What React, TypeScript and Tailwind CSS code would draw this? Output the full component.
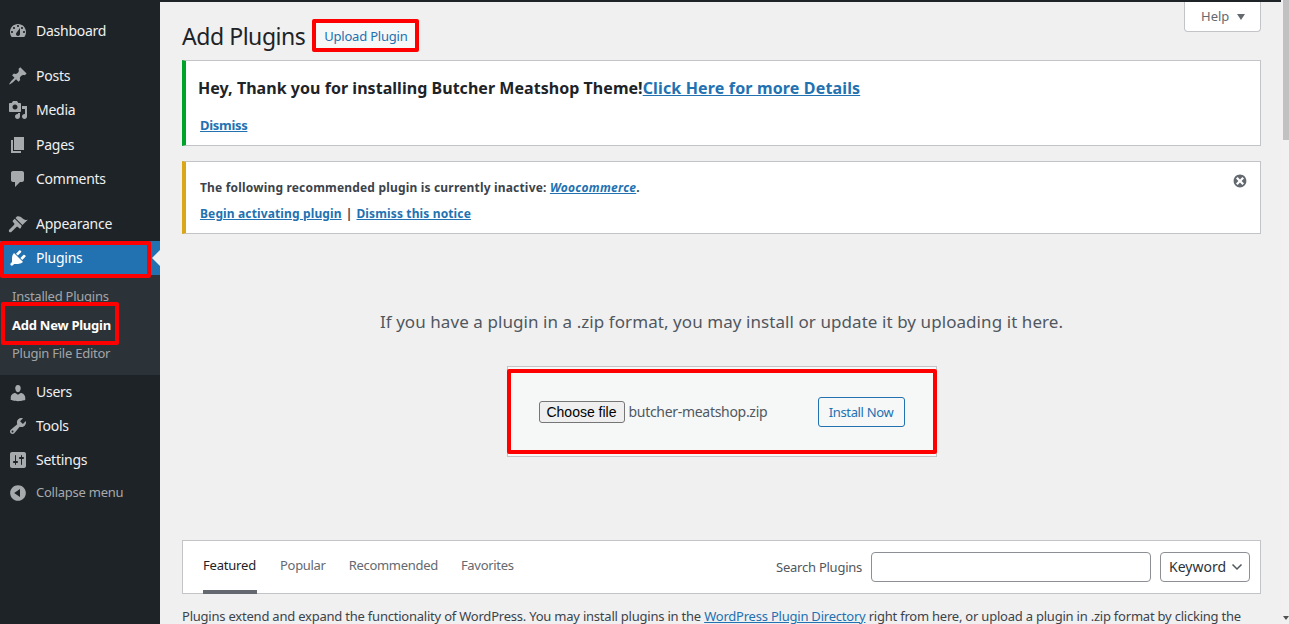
import type { ReactNode } from 'react';

const ICONS: Record<string, string> = {
  dashboard:
    'M3.76 16h12.48c1.1-1.37 1.76-3.11 1.76-5 0-4.42-3.58-8-8-8s-8 3.58-8 8c0 1.89.66 3.63 1.76 5zM10 4c.55 0 1 .45 1 1s-.45 1-1 1-1-.45-1-1 .45-1 1-1zM6 6c.55 0 1 .45 1 1s-.45 1-1 1-1-.45-1-1 .45-1 1-1zm8 0c.55 0 1 .45 1 1s-.45 1-1 1-1-.45-1-1 .45-1 1-1zm-5.37 5.55L12 7v6c0 1.1-.9 2-2 2s-2-.9-2-2c0-.57.24-1.08.63-1.45zM4 10c.55 0 1 .45 1 1s-.45 1-1 1-1-.45-1-1 .45-1 1-1zm12 0c.55 0 1 .45 1 1s-.45 1-1 1-1-.45-1-1 .45-1 1-1z',
  posts:
    'M10.44 3.02l1.82-1.82 6.36 6.35-1.83 1.82c-1.05-.68-2.48-.57-3.41.36l-.75.75c-.92.93-1.04 2.35-.35 3.41l-1.83 1.82-2.41-2.41-2.8 2.79c-.42.42-3.38 2.71-3.8 2.29s1.86-3.39 2.28-3.81l2.79-2.79L4.1 9.36l1.83-1.82c1.05.69 2.48.57 3.4-.36l.75-.75c.93-.92 1.05-2.35.36-3.41z',
  media:
    'M13 11V4c0-.55-.45-1-1-1h-1.67L9 1H5L3.67 3H2c-.55 0-1 .45-1 1v7c0 .55.45 1 1 1h10c.55 0 1-.45 1-1zM7 4.5c1.38 0 2.5 1.12 2.5 2.5S8.38 9.5 7 9.5 4.5 8.38 4.5 7 5.62 4.5 7 4.5zM14 6h5v10.5c0 1.38-1.12 2.5-2.5 2.5S14 17.88 14 16.5s1.12-2.5 2.5-2.5c.17 0 .34.02.5.05V9h-3V6zm-4 8.05V13h2v3.5c0 1.38-1.12 2.5-2.5 2.5S7 17.88 7 16.5 8.12 14 9.5 14c.17 0 .34.02.5.05z',
  pages: 'M6 15V2h10v13H6zm-1 1h8v2H3V5h2v11z',
  comments: 'M5 2h9c1.1 0 2 .9 2 2v7c0 1.1-.9 2-2 2h-2l-5 5v-5H5c-1.1 0-2-.9-2-2V4c0-1.1.9-2 2-2z',
  appearance:
    'M14.48 11.06L7.41 3.99l1.5-1.5c.5-.56 2.3-.47 3.51.32 1.21.8 1.43 1.28 2.91 2.1 1.18.64 2.45 1.26 4.45.85zm-.71.71L6.7 4.7 4.93 6.47c-.39.39-.39 1.02 0 1.41l1.06 1.06c.59.56.48 1.53 0 2-.97.98-2.53 2.65-3.53 3.65l-1.2 1.2c-.6.6-.6 1.5 0 2.1s1.5.6 2.1 0l1.2-1.2c1-1 2.67-2.56 3.65-3.53.47-.48 1.44-.59 2 0l1.06 1.06c.39.39 1.02.39 1.41 0z',
  plugins:
    'M13.11 4.36L9.87 7.6 8 5.73l3.24-3.24c.35-.34 1.05-.2 1.56.32.52.51.66 1.21.31 1.55zm-8 1.77l.91-1.12 9.01 9.01-1.19.84c-.71.71-2.63 1.16-3.82 1.16H6.14L4.9 17.26c-.59.59-1.54.59-2.12 0-.59-.58-.59-1.53 0-2.12l1.24-1.24v-3.88c0-1.13.4-3.19 1.09-3.89zm7.26 3.97l3.24-3.24c.34-.35 1.04-.21 1.55.31.52.51.66 1.21.31 1.55l-3.24 3.25z',
  users:
    'M10 9.25c-2.27 0-2.73-3.44-2.73-3.44C7 4.02 7.82 2 9.97 2c2.16 0 2.98 2.02 2.71 3.81 0 0-.41 3.44-2.68 3.44zm0 2.57L12.72 10c2.39 0 4.52 2.33 4.52 4.53v2.49s-3.65 1.13-7.24 1.13c-3.65 0-7.24-1.13-7.24-1.13v-2.49c0-2.25 1.94-4.48 4.47-4.48z',
  tools:
    'M16.68 9.77c-1.34 1.34-3.3 1.67-4.95.99l-5.41 6.52c-.99.99-2.59.99-3.58 0s-.99-2.59 0-3.57l6.52-5.42c-.68-1.65-.35-3.61.99-4.95 1.28-1.28 3.12-1.62 4.72-1.06l-2.89 2.89 2.82 2.82 2.86-2.87c.53 1.58.18 3.39-1.08 4.65zM3.81 16.21c.4.39 1.04.39 1.43 0 .4-.4.4-1.04 0-1.43-.39-.4-1.03-.4-1.43 0-.39.39-.39 1.03 0 1.43z',
  settings:
    'M18 16V4c0-1.1-.9-2-2-2H4c-1.1 0-2 .9-2 2v12c0 1.1.9 2 2 2h12c1.1 0 2-.9 2-2zM8 11h1c.55 0 1 .45 1 1s-.45 1-1 1H8v1.5c0 .28-.22.5-.5.5s-.5-.22-.5-.5V13H6c-.55 0-1-.45-1-1s.45-1 1-1h1V5.5c0-.28.22-.5.5-.5s.5.22.5.5V11zm5-2h-1c-.55 0-1-.45-1-1s.45-1 1-1h1V5.5c0-.28.22-.5.5-.5s.5.22.5.5V7h1c.55 0 1 .45 1 1s-.45 1-1 1h-1v5.5c0 .28-.22.5-.5.5s-.5-.22-.5-.5V9z',
  collapse:
    'M10 2.16c4.33 0 7.84 3.51 7.84 7.84s-3.51 7.84-7.84 7.84S2.16 14.33 2.16 10 5.71 2.16 10 2.16zm2 11.72V6.12L6.18 9.97z',
};

function MenuIcon({ name, className }: { name: string; className: string }) {
  return (
    <svg viewBox="0 0 20 20" className={className} fill="currentColor">
      <path d={ICONS[name]} />
    </svg>
  );
}

function MenuItem({ icon, label, height = 'h-[34px]' }: { icon: string; label: string; height?: string }) {
  return (
    <div className={`flex items-center text-[14px] tracking-[-0.25px] text-[#f0f0f1] ${height}`}>
      <MenuIcon name={icon} className="ml-2 mr-2 mt-[2px] h-5 w-5 text-[#a7aaad]" />
      <span>{label}</span>
    </div>
  );
}

function Sidebar() {
  return (
    <aside className="w-[160px] shrink-0 bg-[#1d2327] pt-[13px]">
      <MenuItem icon="dashboard" label="Dashboard" />
      <div className="h-[11px]" />
      <MenuItem icon="posts" label="Posts" />
      <MenuItem icon="media" label="Media" />
      <div className="h-px" />
      <MenuItem icon="pages" label="Pages" />
      <MenuItem icon="comments" label="Comments" />
      <div className="h-[11px]" />
      <MenuItem icon="appearance" label="Appearance" />
      <div className="h-px" />

      <div className="relative z-10 flex h-[34px] items-center bg-[#2271b1] pb-[2px] text-[14px] tracking-[-0.25px] text-white">
        <MenuIcon name="plugins" className="ml-2 mr-2 mt-[2px] h-5 w-5" />
        <span>Plugins</span>
        <div className="absolute right-0 top-[9px] h-0 w-0 border-y-[8px] border-r-[8px] border-y-transparent border-r-[#f0f0f1]" />
        <div className="absolute left-0 top-0 h-[37px] w-[151px] rounded-[2px] border-4 border-[#ff0000]" />
      </div>

      <div className="relative h-[100px] bg-[#2c3338] pt-[7px] text-[13px] leading-[28.5px] tracking-[-0.25px]">
        <div className="pl-3 text-[#c3c4c7]/80">Installed Plugins</div>
        <div className="pl-3 font-bold text-white">Add New Plugin</div>
        <div className="pl-3 text-[#c3c4c7]/80">Plugin File Editor</div>
        <div className="absolute left-[1px] top-[27px] h-[43px] w-[118px] rounded-[2px] border-4 border-[#ff0000]" />
      </div>

      <MenuItem icon="users" label="Users" height="h-[33px]" />
      <MenuItem icon="tools" label="Tools" />
      <MenuItem icon="settings" label="Settings" />
      <div className="flex h-[34px] items-center text-[13px] tracking-[-0.25px] text-[#a7aaad]">
        <MenuIcon name="collapse" className="ml-2 mr-2 h-5 w-5" />
        <span>Collapse menu</span>
      </div>
    </aside>
  );
}

function Notice({ color, children, height }: { color: string; children: ReactNode; height: string }) {
  return (
    <div className={`relative border border-l-4 border-[#c3c4c7] bg-white ${color} ${height}`}>{children}</div>
  );
}

function TabLink({ children, active }: { children: ReactNode; active?: boolean }) {
  return (
    <div
      className={`flex h-[53px] items-center border-b-4 pt-[1px] text-[13px] ${
        active ? 'w-[54px] border-[#646970] tracking-[-0.2px] text-[#1d2327]' : 'border-transparent tracking-[-0.3px] text-[#646970]'
      }`}
    >
      {children}
    </div>
  );
}

export default function App() {
  return (
    <div className="flex h-[624px] w-[1289px] overflow-hidden bg-[#f0f0f1] font-['Noto_Sans',sans-serif] text-[#3c434a]">
      <Sidebar />

      <main className="w-[1121px] shrink-0">
        <div className="h-[2px] bg-[#1d2327]" />
        <div className="relative pl-[22px] pr-5">
          <div className="absolute right-5 top-0 flex h-[30px] w-[77px] items-center rounded-b border border-t-0 border-[#c3c4c7] bg-white pl-4 text-[13px] text-[#646970]">
            Help
            <span className="ml-[8px] h-0 w-0 border-x-[4px] border-t-[6px] border-x-transparent border-t-[#646970]" />
          </div>

          <div className="flex h-[58px] items-start pt-[17px]">
            <h1 className="text-[23px] font-normal leading-[34px] tracking-[-0.45px] text-[#1d2327]">Add Plugins</h1>
            <div className="relative ml-[7px] flex h-[33px] w-[107px] items-center justify-center rounded-[2px] border-4 border-[#ff0000] bg-[#f6f7f7] pt-[2px] text-[13px] tracking-[-0.2px] text-[#2271b1]">
              Upload Plugin
            </div>
          </div>

          <Notice color="border-l-[#00a32a]" height="h-[86px]">
            <p className="pl-3 pt-[14px] text-[16px] font-bold leading-[26px] tracking-[0.04px] text-[#1d2327]">
              Hey, Thank you for installing Butcher Meatshop Theme!
              <a className="tracking-[0.15px] text-[#2271b1] underline">Click Here for more Details</a>
            </p>
            <p className="pl-[14px] pt-[15px] text-[13px] font-bold tracking-[-0.3px] text-[#2271b1] underline">Dismiss</p>
          </Notice>

          <div className="h-[15px]" />

          <Notice color="border-l-[#dba617]" height="h-[73px]">
            <p className="pl-[14px] pt-4 text-[12px] font-bold leading-[20px] tracking-[0.18px]">
              The following recommended plugin is currently inactive:{' '}
              <a className="italic tracking-[0.3px] text-[#2271b1] underline">Woocommerce</a>.
            </p>
            <p className="pl-[14px] pt-1.5 text-[12px] font-bold leading-[20px] tracking-[0.13px]">
              <a className="text-[#2271b1] underline">Begin activating plugin</a>
              <span className="mx-1">|</span>
              <a className="text-[#2271b1] underline">Dismiss this notice</a>
            </p>
            <svg viewBox="0 0 20 20" className="absolute right-[12px] top-[11px] h-4 w-4 text-[#646970]" fill="currentColor">
              <path d="M10 2c4.42 0 8 3.58 8 8s-3.58 8-8 8-8-3.58-8-8 3.58-8 8-8zm5 11l-3-3 3-3-2-2-3 3-3-3-2 2 3 3-3 3 2 2 3-3 3 3z" />
            </svg>
          </Notice>

          <p className="pt-[76px] text-center text-[17px] leading-[24px] tracking-[0.07px] text-[#50575e]">
            If you have a plugin in a .zip format, you may install or update it by uploading it here.
          </p>

          <div className="relative mx-auto mt-[32px] flex h-[91px] w-[430px] items-center border border-[#c3c4c7] bg-[#f6f7f7] pl-[31px]">
            <button className="h-[22px] w-[86px] rounded-[3px] border border-[#767676] bg-[#efefef] font-['Liberation_Sans',sans-serif] text-[14px] text-black">
              Choose file
            </button>
            <span className="ml-1 w-[189px] text-[14px] tracking-[-0.3px] text-[#50575e]">butcher-meatshop.zip</span>
            <div className="flex h-[30px] w-[87px] items-center justify-center rounded-[3px] border border-[#2271b1] pt-[2px] text-[13px] tracking-[-0.35px] text-[#2271b1]">
              Install Now
            </div>
            <div className="absolute -left-px top-[2px] h-[85px] w-[430px] rounded-[2px] border-4 border-[#ff0000]" />
          </div>

          <div className="mt-[83px] flex h-[54px] items-center border border-[#c3c4c7] bg-white pl-5 pr-[10px]">
            <div className="flex gap-[23px]">
              <TabLink active>Featured</TabLink>
              <TabLink>Popular</TabLink>
              <TabLink>Recommended</TabLink>
              <TabLink>Favorites</TabLink>
            </div>
            <span className="ml-auto mr-[9px] pt-[1px] text-[13px] tracking-[-0.25px] text-[#50575e]">Search Plugins</span>
            <div className="h-[30px] w-[280px] rounded border border-[#8c8f94] bg-white" />
            <div className="ml-[9px] flex h-[30px] w-[90px] items-center justify-between rounded border border-[#8c8f94] bg-white pb-px pl-2 pr-[6px] text-[14px] text-[#2c3338]">
              Keyword
              <svg viewBox="0 0 12 8" className="h-2 w-3" fill="none" stroke="#50575e" strokeWidth="1.5">
                <path d="M1.5 1.5 6 6l4.5-4.5" />
              </svg>
            </div>
          </div>

          <p className="whitespace-nowrap pt-[12px] text-[13px] leading-[20px] tracking-[-0.22px] text-[#3c434a]">
            Plugins extend and expand the functionality of WordPress. You may install plugins in the{' '}
            <a className="text-[#2271b1] underline">WordPress Plugin Directory</a> right from here, or upload a plugin in
            .zip format by clicking the
          </p>
        </div>
      </main>

      <div className="relative w-2 shrink-0 bg-[#f1f1f1]">
        <div className="ml-[2px] h-[140px] w-[6px] bg-[#c1c1c1]" />
        <div className="absolute bottom-[4px] right-0 h-0 w-0 border-x-[3px] border-t-[4px] border-x-transparent border-t-[#505050]" />
      </div>
    </div>
  );
}
